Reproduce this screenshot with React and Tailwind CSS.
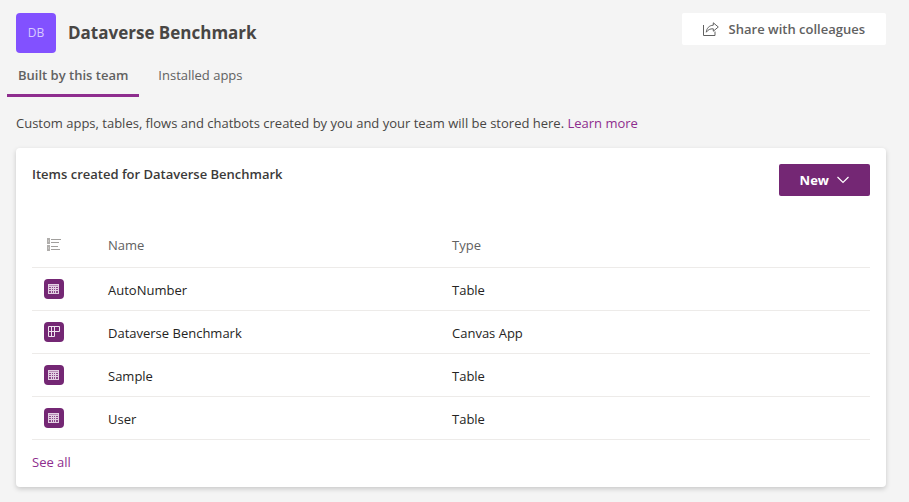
import React, { useState } from "react";

const items = [
  { name: "AutoNumber", type: "Table" },
  { name: "Dataverse Benchmark", type: "Canvas App" },
  { name: "Sample", type: "Table" },
  { name: "User", type: "Table" },
];

const tabs = ["Built by this team", "Installed apps"];

const ShareIcon = () => (
  <svg width="16" height="14" viewBox="0 0 16 14" fill="none" stroke="#616161" strokeWidth="1" aria-hidden="true">
    <path d="M0.5 3v10.5h11.5V9.5" />
    <path d="M10.3 0.8l5 4.2-5 4.2V6.8C7 6.6 5 7.8 3.3 10.2 3.6 6.4 6 3.4 10.3 3.2z" strokeLinejoin="round" />
  </svg>
);

const ListIcon = () => (
  <svg width="14" height="13" viewBox="0 0 14 13" aria-hidden="true">
    <path d="M0 0h3v6H0zM0 7h3v6H0z" fill="#b0aeac" />
    <path d="M1 2h1v2H1zM1 9h1v2H1z" fill="#c8c6c4" />
    <path d="M4 1h10v1H4zM4 4h8v1H4zM4 8h7v1H4zM4 11h9v1H4z" fill="#a19f9d" />
  </svg>
);

const TableIcon = () => (
  <svg width="20" height="20" viewBox="0 0 20 20" aria-hidden="true">
    <rect width="20" height="20" rx="4" fill="#742774" />
    <rect x="4" y="5" width="11" height="10" fill="#e3d0e3" />
    <path d="M5 6h9v1H5z" fill="#b68db6" />
    <path
      d="M5 8h2v1H5zM8 8h1v1H8zM10 8h1v1h-1zM12 8h2v1h-2zM5 10h2v1H5zM8 10h1v1H8zM10 10h1v1h-1zM12 10h2v1h-2zM5 12h2v2H5zM8 12h1v2H8zM10 12h1v2h-1zM12 12h2v2h-2z"
      fill="#8a4a8a"
    />
  </svg>
);

const CanvasIcon = () => (
  <svg width="20" height="20" viewBox="0 0 20 20" aria-hidden="true">
    <rect width="20" height="20" rx="4" fill="#742774" />
    <path d="M4.5 4.5h11v5h-11zM4.5 9.5v5h6v-10M7.5 4.5v10" fill="none" stroke="#efe3ef" />
  </svg>
);

const App = () => {
  const [activeTab, setActiveTab] = useState(tabs[0]);

  return (
    <div className="min-h-screen bg-[#f4f4f4] pt-[13px] pr-[23px] pb-[15px] pl-4 font-['Open_Sans','Noto_Sans',sans-serif] text-[13px] leading-5 text-[#484644]">
      {/* Header */}
      <header className="flex items-start justify-between">
        <div className="flex items-center gap-3">
          <div className="flex h-10 w-10 items-center justify-center rounded bg-[#8251ff] text-xs font-medium text-[#d9caff]">
            DB
          </div>
          <h1 className="text-[17px] leading-6 font-bold text-[#484644]">Dataverse Benchmark</h1>
        </div>
        <button className="flex h-8 items-center gap-[10px] rounded-xs bg-white px-[21px] font-semibold text-[#616161]">
          <ShareIcon />
          Share with colleagues
        </button>
      </header>

      {/* Tabs */}
      <nav className="-ml-[9px] flex gap-2" role="tablist">
        {tabs.map((tab) => (
          <button
            key={tab}
            role="tab"
            aria-selected={activeTab === tab}
            onClick={() => setActiveTab(tab)}
            className={`h-11 border-b-3 px-[11px] pt-[3px] text-[#616161] ${
              activeTab === tab ? "border-[#8e2d8e] font-semibold" : "border-transparent"
            }`}
          >
            {tab}
          </button>
        ))}
      </nav>

      <p className="mt-4 mb-[15px]">
        Custom apps, tables, flows and chatbots created by you and your team will be stored here.{" "}
        <a href="#learn-more" className="text-[#8e2d8e]">Learn more</a>
      </p>

      {/* Items */}
      <section className="rounded bg-white px-4 pt-4 pb-[15px] shadow-[0_2px_5px_rgba(0,0,0,0.18)]">
        <div className="flex items-start justify-between">
          <h2 className="font-semibold text-[#3b3a39]">Items created for Dataverse Benchmark</h2>
          <button className="flex h-8 items-center gap-2 rounded-xs bg-[#742774] px-[21px] font-bold text-white">
            New
            <svg width="12" height="8" viewBox="0 0 12 8" fill="none" stroke="#fff" strokeWidth="1.2" aria-hidden="true">
              <path d="M0.5 1L6 6.5 11.5 1" />
            </svg>
          </button>
        </div>

        <table className="mt-[27px] w-full table-fixed border-collapse text-left">
          <thead>
            <tr className="h-11 border-b border-[#edebe9] text-[#616161]">
              <th className="w-[76px] pl-[15px]" aria-label="Icon">
                <ListIcon />
              </th>
              <th className="w-[344px] font-normal">Name</th>
              <th className="font-normal">Type</th>
            </tr>
          </thead>
          <tbody>
            {items.map((item) => (
              <tr key={item.name} className="h-[43px] border-b border-[#edebe9] text-[#252423]">
                <td className="pl-3">{item.type === "Table" ? <TableIcon /> : <CanvasIcon />}</td>
                <td className="pt-[2px]">{item.name}</td>
                <td className="pt-[2px]">{item.type}</td>
              </tr>
            ))}
          </tbody>
        </table>

        <a href="#see-all" className="mt-3 inline-block text-[#8e2d8e]">See all</a>
      </section>
    </div>
  );
};

export default App;
